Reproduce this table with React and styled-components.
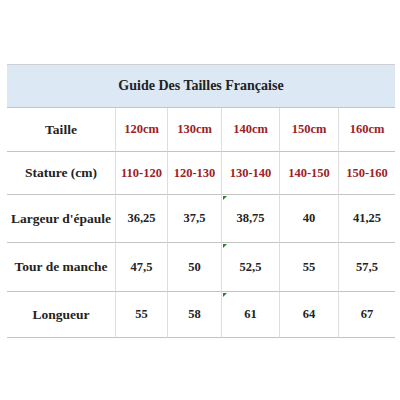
import React from 'react';
import styled, { createGlobalStyle } from 'styled-components';

const serif = '"Liberation Serif", "Times New Roman", "DejaVu Serif", serif';

const GlobalStyle = createGlobalStyle`
  body {
    margin: 0;
    background: #ffffff;
  }
`;

const Page = styled.div`
  width: 400px;
  height: 400px;
  padding: 64px 0 0 7px;
  box-sizing: border-box;
`;

const Grid = styled.div`
  display: grid;
  grid-template-columns: 108px 52px 54px 58px 59px 57px;
  grid-template-rows: 43px 44px 43px 48px 49px 46px;
  width: 388px;
  border-top: 1px solid #cfcfd6;
  font-family: ${serif};
`;

const Title = styled.div`
  grid-column: 1 / -1;
  background: #dce8f4;
  display: flex;
  align-items: center;
  justify-content: center;
  font-family: ${serif};
  font-weight: bold;
  font-size: 14px;
  color: #222;
  border-bottom: 1px solid #c4c4c4;
`;

const Cell = styled.div`
  position: relative;
  display: flex;
  align-items: center;
  justify-content: center;
  font-family: ${serif};
  font-weight: bold;
  font-size: ${({ $label }) => ($label ? '13.5px' : '12.5px')};
  color: ${({ $red }) => ($red ? '#9b2226' : '#232323')};
  border-bottom: 1px solid #c4c4c4;
  border-left: ${({ $label }) => ($label ? 'none' : '1px solid #dedede')};
  white-space: nowrap;
`;

const Marker = styled.span`
  position: absolute;
  top: 1px;
  left: 1px;
  width: 0;
  height: 0;
  border-top: 4px solid #2e7d32;
  border-right: 4px solid transparent;
`;

const rows = [
  { label: 'Taille', red: true, values: ['120cm', '130cm', '140cm', '150cm', '160cm'] },
  { label: 'Stature (cm)', red: true, values: ['110-120', '120-130', '130-140', '140-150', '150-160'] },
  { label: "Largeur d'épaule", values: ['36,25', '37,5', '38,75', '40', '41,25'], mark: 2 },
  { label: 'Tour de manche', values: ['47,5', '50', '52,5', '55', '57,5'], mark: 2 },
  { label: 'Longueur', values: ['55', '58', '61', '64', '67'], mark: 2 },
];

const App = () => (
  <>
    <GlobalStyle />
    <Page>
      <Grid>
        <Title>Guide Des Tailles Française</Title>
        {rows.map((row) => (
          <React.Fragment key={row.label}>
            <Cell $label>{row.label}</Cell>
            {row.values.map((v, i) => (
              <Cell key={i} $red={row.red}>
                {row.mark === i && <Marker />}
                {v}
              </Cell>
            ))}
          </React.Fragment>
        ))}
      </Grid>
    </Page>
  </>
);

export default App;
